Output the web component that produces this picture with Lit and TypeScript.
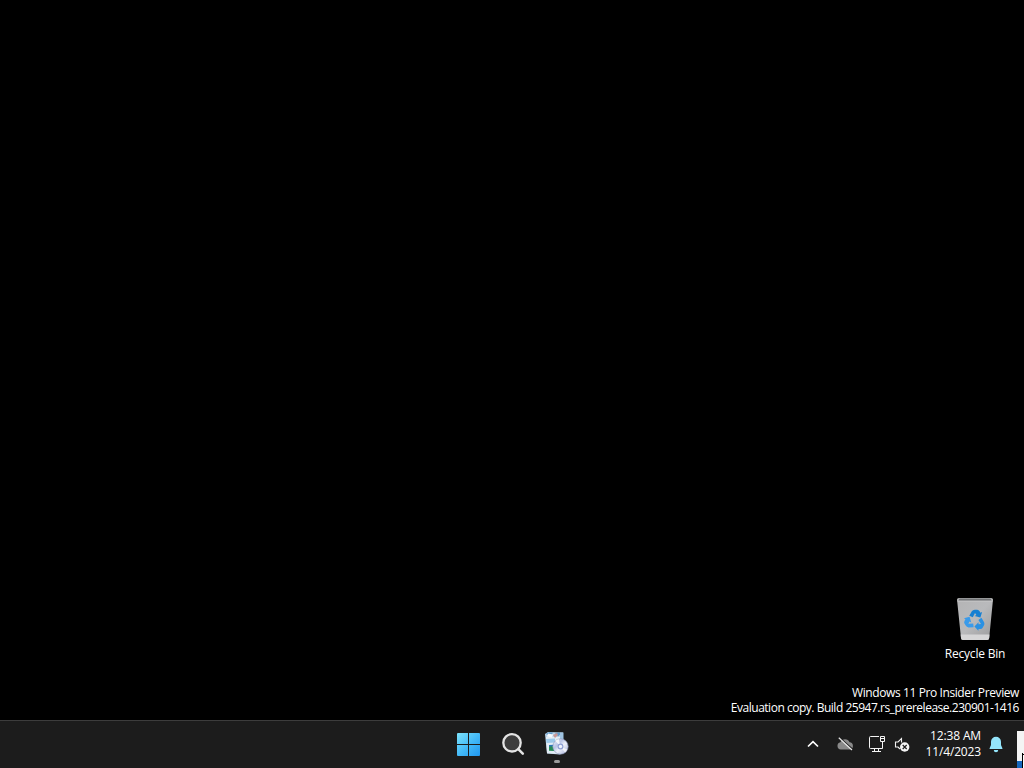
import { LitElement, html, css, svg } from 'lit';
import { customElement } from 'lit/decorators.js';

const startIcon = svg`
  <svg width="24" height="24" viewBox="0 -1 24 24">
    <defs>
      <linearGradient id="win" x1="0" y1="0" x2="24" y2="24" gradientUnits="userSpaceOnUse">
        <stop offset="0" stop-color="#7ce3fb" />
        <stop offset="0.5" stop-color="#43b9f8" />
        <stop offset="1" stop-color="#1c93ee" />
      </linearGradient>
    </defs>
    <path fill="url(#win)" d="M1 0h10v11H0V1a1 1 0 0 1 1-1zM12 0h10a1 1 0 0 1 1 1v10H12zM0 12h11v11H1a1 1 0 0 1-1-1zM12 12h11v10a1 1 0 0 1-1 1H12z" />
  </svg>
`;

const searchIcon = svg`
  <svg width="24" height="24" viewBox="0 0 24 24">
    <circle cx="11" cy="10.800" r="8.700" fill="#3d3d3d" stroke="#e4e4e4" stroke-width="2.300" />
    <path d="M17.300 17.100L21.800 21.600" stroke="#e4e4e4" stroke-width="2.600" stroke-linecap="round" />
  </svg>
`;

const setupIcon = svg`
  <svg width="26" height="26" viewBox="0 0 26 26">
    <defs>
      <linearGradient id="disc" x1="0" y1="0" x2="1" y2="1">
        <stop offset="0" stop-color="#f4f6fb" />
        <stop offset="0.350" stop-color="#b9c4e6" />
        <stop offset="0.550" stop-color="#eef2fb" />
        <stop offset="1" stop-color="#9fa9d2" />
      </linearGradient>
    </defs>
    <path d="M1 3L4 1l15 .5V20l-3 3.500L3 22.500z" fill="#bdd5e9" />
    <path d="M2 6h14v17L3 22.300z" fill="#e3edf5" />
    <path d="M1.500 3L5 1.300l4 .2-2 3.500zM11 2l4-.5 2 1.600-3 2.500z" fill="#5f9bcb" />
    <path d="M4 2.500l5 1-1 3-5-1z" fill="#f7fbff" />
    <path d="M9 4l4-2 1 2-3 3z" fill="#c99796" />
    <path d="M2 8l9-.5v4l-8.500.5z" fill="#9cc9ea" />
    <path d="M5 14.500l5-.3v5.800l-5-.3z" fill="#278d56" />
    <path d="M5 14l5-.3v1.600l-5 .2z" fill="#2c75b8" />
    <path d="M16 1.500h3.500V9H16z" fill="#9fc4e2" />
    <circle cx="16.500" cy="15.500" r="7.700" fill="url(#disc)" stroke="#8995b9" stroke-width="0.600" />
    <path d="M16.500 15.500L11.200 9.800A7.700 7.700 0 0 1 14.700 8z" fill="#fff" opacity="0.800" />
    <path d="M16.500 15.500l4.500 6a7.500 7.500 0 0 0 2.300-3z" fill="#fff" opacity="0.700" />
    <circle cx="16.500" cy="15.500" r="2.900" fill="#8d9ed2" />
    <circle cx="16.500" cy="15.500" r="1.700" fill="#f1f5ff" />
  </svg>
`;

const chevronIcon = svg`
  <svg width="12" height="8" viewBox="0 0 12 8">
    <path d="M1 6.500L6 1.700 11 6.500" fill="none" stroke="#fff" stroke-width="1.700" />
  </svg>
`;

const cloudIcon = svg`
  <svg width="18" height="16" viewBox="0 0 18 16">
    <path d="M4.800 13.500a3.700 3.700 0 0 1-.4-7.300A5 5 0 0 1 13.600 6.200a3.700 3.700 0 0 1 .4 7.300z" fill="#8a8a8a" />
    <path d="M4 2L17 13.500" stroke="#1c1c1c" stroke-width="1.200" />
    <path d="M2.800 1.800L16 14" stroke="#e8e8e8" stroke-width="1.200" />
  </svg>
`;

const networkIcon = svg`
  <svg width="18" height="18" viewBox="0 0 18 18" fill="none" stroke="#f4f4f4">
    <path d="M11 1.500H2.500a1 1 0 0 0-1 1v10a1 1 0 0 0 1 1h12V7.500" />
    <path d="M6.500 13.500v3M10.500 13.500v3M4 16.500h9" />
    <path d="M12.500 1.500h4v5h-4zM12.500 3.500h4M14.500 6.500v2" />
  </svg>
`;

const volumeIcon = svg`
  <svg width="16" height="16" viewBox="0 0 16 16">
    <path d="M7.500 6.500V2.500L4 6H1.500v5H4l2 2" fill="none" stroke="#f0f0f0" stroke-width="1.100" />
    <circle cx="10.700" cy="11" r="4.700" fill="#f4f4f4" />
    <path d="M8.700 9l4 4M12.700 9l-4 4" stroke="#1c1c1c" stroke-width="1.200" />
  </svg>
`;

const bellIcon = svg`
  <svg width="14" height="17" viewBox="0 0 14 17">
    <path d="M7 .8a5 5 0 0 0-5 5V9L.6 12.200c-.2.500.1.900.6.900h11.600c.5 0 .8-.4.600-.9L12 9V5.800a5 5 0 0 0-5-5z" fill="#94e5fb" />
    <path d="M4.800 14h4.400a2.200 2.200 0 0 1-4.400 0z" fill="#94e5fb" />
  </svg>
`;

const arrow = svg`
  <path d="M-5.500 -4.500L-3 -9Q-2 -10.500 0 -10.500H2.500Q4 -10.500 4.800 -9L5.600 -7.600L7.300 -8.300L5.600 -2.800L-.2 -4.200L1.600 -5.200L.2 -7.300L-2 -3z" />
`;

const binIcon = svg`
  <svg width="38" height="44" viewBox="0 0 38 44">
    <defs>
      <linearGradient id="bin" x1="0" y1="0" x2="1" y2="1">
        <stop offset="0" stop-color="#b4b4b5" />
        <stop offset="0.500" stop-color="#b9babc" />
        <stop offset="1" stop-color="#9a9a9b" />
      </linearGradient>
    </defs>
    <path d="M1 2.500Q1 1 3 1h32q2 0 2 1.500L33.200 41q-.2 2-2 2H7q-1.800 0-2-2z" fill="url(#bin)" />
    <path d="M3.500 1.500h31L36 4H2z" fill="#747678" />
    <path d="M1.300 4h35.400" stroke="#cfcfd0" stroke-width="0.800" />
    <path d="M4.700 37.500h28.800L33.200 41q-.2 2-2 2H7q-1.800 0-2-2z" fill="#d6d6d7" />
    <g transform="translate(18.800 23.300)">
      <g fill="#1780d2">${arrow}</g>
      <g fill="#2a91e3" transform="rotate(120)">${arrow}</g>
      <g fill="#3a9bea" transform="rotate(240)">${arrow}</g>
    </g>
  </svg>
`;

@customElement('desktop-icon')
export class DesktopIcon extends LitElement {
  static styles = css`
    :host {
      display: flex;
      flex-direction: column;
      align-items: center;
      width: 76px;
      gap: 5px;
      font-size: 12px;
      line-height: 16px;
      letter-spacing: -0.2px;
      color: #fff;
    }

    svg {
      display: block;
    }
  `;

  render() {
    return html`
      ${binIcon}
      <span>Recycle Bin</span>
    `;
  }
}

@customElement('task-bar')
export class TaskBar extends LitElement {
  static styles = css`
    :host {
      display: grid;
      grid-template-columns: 1fr auto 1fr;
      box-sizing: border-box;
      height: 48px;
      background: #1c1c1c;
      border-top: 1px solid #3c3c3c;
      color: #fff;
    }

    svg {
      display: block;
    }

    .apps {
      grid-column: 2;
      display: flex;
      padding-left: 1px;
    }

    .app {
      position: relative;
      display: flex;
      align-items: center;
      justify-content: center;
      box-sizing: border-box;
      width: 44px;
      height: 47px;
      padding-bottom: 1px;
    }

    .running::after {
      content: '';
      position: absolute;
      left: 19px;
      bottom: 5px;
      width: 6px;
      height: 3px;
      border-radius: 2px;
      background: #9b9b9b;
    }

    .tray {
      display: flex;
      align-items: center;
      justify-content: flex-end;
      padding: 0 21px 1px 0;
    }

    .chevron {
      margin-right: 17px;
    }

    .cloud {
      margin-right: 14px;
    }

    .network {
      margin-right: 8px;
    }

    .clock {
      width: 71px;
      margin-right: 8px;
      font-size: 12px;
      line-height: 16px;
      text-align: right;
      letter-spacing: -0.15px;
    }
  `;

  render() {
    return html`
      <div class="apps">
        <div class="app">${startIcon}</div>
        <div class="app">${searchIcon}</div>
        <div class="app running">${setupIcon}</div>
      </div>
      <div class="tray">
        <div class="chevron">${chevronIcon}</div>
        <div class="cloud">${cloudIcon}</div>
        <div class="network">${networkIcon}</div>
        <div class="volume">${volumeIcon}</div>
        <div class="clock">
          <div>12:38 AM</div>
          <div>11/4/2023</div>
        </div>
        <div class="bell">${bellIcon}</div>
      </div>
    `;
  }
}

@customElement('app-root')
export class AppRoot extends LitElement {
  static styles = css`
    :host {
      position: relative;
      display: flex;
      flex-direction: column;
      width: 1024px;
      height: 768px;
      overflow: hidden;
      background: #000;
      font-family: 'Open Sans', 'Noto Sans', sans-serif;
    }

    .desktop {
      flex: 1;
      display: flex;
      flex-direction: column;
      align-items: flex-end;
      justify-content: flex-end;
    }

    desktop-icon {
      margin-right: 11px;
      margin-bottom: 23px;
    }

    .watermark {
      padding: 0 5px 5px 0;
      font-size: 12px;
      line-height: 15px;
      letter-spacing: -0.4px;
      text-align: right;
      color: #fff;
    }

    .build {
      letter-spacing: -0.48px;
    }

    /* window sliding in over the corner of the taskbar */
    .flyout {
      position: absolute;
      right: 0;
      bottom: 0;
      width: 7px;
      height: 37px;
      background: linear-gradient(#f4f4f4 30px, #1567bd 30px);
    }

    .cursor {
      position: absolute;
      right: 0;
      bottom: 0;
      width: 2px;
      height: 15px;
    }
  `;

  render() {
    return html`
      <div class="desktop">
        <desktop-icon></desktop-icon>
        <div class="watermark">
          <div>Windows 11 Pro Insider Preview</div>
          <div class="build">Evaluation copy. Build 25947.rs_prerelease.230901-1416</div>
        </div>
      </div>
      <task-bar></task-bar>
      <div class="flyout"></div>
      <svg class="cursor" viewBox="0 0 2 15">
        <path d="M1 1h1v14H1z" fill="#fff" />
        <path d="M.5 0v15M1 1.500h1" stroke="#000" />
      </svg>
    `;
  }
}
